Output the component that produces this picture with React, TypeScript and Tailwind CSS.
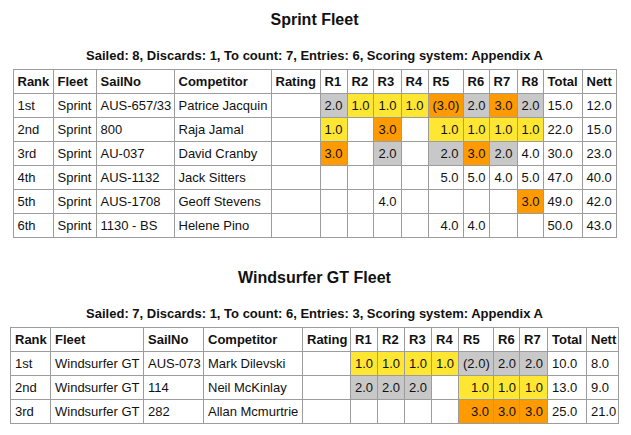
import React from "react";

type Cell = { v: string; c?: "g" | "y" | "o" };

const colorClass = (c?: "g" | "y" | "o") =>
  c === "g" ? "bg-[#c8c8c8]" : c === "y" ? "bg-[#ffe633]" : c === "o" ? "bg-[#ff9a00]" : "";

type Row = { rank: string; fleet: string; sail: string; comp: string; races: Cell[]; total: string; nett: string };

const sprintRows: Row[] = [
  { rank: "1st", fleet: "Sprint", sail: "AUS-657/33", comp: "Patrice Jacquin", races: [{ v: "2.0", c: "g" }, { v: "1.0", c: "y" }, { v: "1.0", c: "y" }, { v: "1.0", c: "y" }, { v: "(3.0)", c: "o" }, { v: "2.0", c: "g" }, { v: "3.0", c: "o" }, { v: "2.0", c: "g" }], total: "15.0", nett: "12.0" },
  { rank: "2nd", fleet: "Sprint", sail: "800", comp: "Raja Jamal", races: [{ v: "1.0", c: "y" }, { v: "" }, { v: "3.0", c: "o" }, { v: "" }, { v: "1.0", c: "y" }, { v: "1.0", c: "y" }, { v: "1.0", c: "y" }, { v: "1.0", c: "y" }], total: "22.0", nett: "15.0" },
  { rank: "3rd", fleet: "Sprint", sail: "AU-037", comp: "David Cranby", races: [{ v: "3.0", c: "o" }, { v: "" }, { v: "2.0", c: "g" }, { v: "" }, { v: "2.0", c: "g" }, { v: "3.0", c: "o" }, { v: "2.0", c: "g" }, { v: "4.0" }], total: "30.0", nett: "23.0" },
  { rank: "4th", fleet: "Sprint", sail: "AUS-1132", comp: "Jack Sitters", races: [{ v: "" }, { v: "" }, { v: "" }, { v: "" }, { v: "5.0" }, { v: "5.0" }, { v: "4.0" }, { v: "5.0" }], total: "47.0", nett: "40.0" },
  { rank: "5th", fleet: "Sprint", sail: "AUS-1708", comp: "Geoff Stevens", races: [{ v: "" }, { v: "" }, { v: "4.0" }, { v: "" }, { v: "" }, { v: "" }, { v: "" }, { v: "3.0", c: "o" }], total: "49.0", nett: "42.0" },
  { rank: "6th", fleet: "Sprint", sail: "1130 - BS", comp: "Helene Pino", races: [{ v: "" }, { v: "" }, { v: "" }, { v: "" }, { v: "4.0" }, { v: "4.0" }, { v: "" }, { v: "" }], total: "50.0", nett: "43.0" },
];

const windRows: Row[] = [
  { rank: "1st", fleet: "Windsurfer GT", sail: "AUS-073", comp: "Mark Dilevski", races: [{ v: "1.0", c: "y" }, { v: "1.0", c: "y" }, { v: "1.0", c: "y" }, { v: "1.0", c: "y" }, { v: "(2.0)", c: "g" }, { v: "2.0", c: "g" }, { v: "2.0", c: "g" }], total: "10.0", nett: "8.0" },
  { rank: "2nd", fleet: "Windsurfer GT", sail: "114", comp: "Neil McKinlay", races: [{ v: "2.0", c: "g" }, { v: "2.0", c: "g" }, { v: "2.0", c: "g" }, { v: "" }, { v: "1.0", c: "y" }, { v: "1.0", c: "y" }, { v: "1.0", c: "y" }], total: "13.0", nett: "9.0" },
  { rank: "3rd", fleet: "Windsurfer GT", sail: "282", comp: "Allan Mcmurtrie", races: [{ v: "" }, { v: "" }, { v: "" }, { v: "" }, { v: "3.0", c: "o" }, { v: "3.0", c: "o" }, { v: "3.0", c: "o" }], total: "25.0", nett: "21.0" },
];

const td = "border border-[#9c9c9c] px-[4px] h-[24px] whitespace-nowrap overflow-hidden";

function ResultsTable({ widths, rows, nRaces, tableW }: { widths: string[]; rows: Row[]; nRaces: number; tableW: string }) {
  const races = Array.from({ length: nRaces }, (_, i) => `R${i + 1}`);
  return (
    <table className={`mx-auto table-fixed border-collapse ${tableW}`}>
      <colgroup>
        {widths.map((w, i) => (
          <col key={i} className={w} />
        ))}
      </colgroup>
      <thead>
        <tr className="font-bold">
          <td className={`${td} text-left`}>Rank</td>
          <td className={`${td} text-left`}>Fleet</td>
          <td className={`${td} text-left`}>SailNo</td>
          <td className={`${td} text-left`}>Competitor</td>
          <td className={`${td} text-left`}>Rating</td>
          {races.map((r) => (
            <td key={r} className={`${td} text-left`}>{r}</td>
          ))}
          <td className={`${td} text-left`}>Total</td>
          <td className={`${td} text-left`}>Nett</td>
        </tr>
      </thead>
      <tbody>
        {rows.map((r) => (
          <tr key={r.rank}>
            <td className={td}>{r.rank}</td>
            <td className={td}>{r.fleet}</td>
            <td className={td}>{r.sail}</td>
            <td className={td}>{r.comp}</td>
            <td className={td}></td>
            {r.races.map((c, i) => (
              <td key={i} className={`${td} text-right ${colorClass(c.c)}`}>{c.v}</td>
            ))}
            <td className={td}>{r.total}</td>
            <td className={td}>{r.nett}</td>
          </tr>
        ))}
      </tbody>
    </table>
  );
}

export default function App() {
  return (
    <div className="w-[631px] h-[435px] bg-white text-[#111] text-[13px] leading-[15px] overflow-hidden" style={{ fontFamily: '"Liberation Sans", Arial, sans-serif' }}>
      <div className="pt-[11px] pr-[2px]">
        <div className="text-center font-bold text-[16px] leading-[18px]">Sprint Fleet</div>
        <div className="text-center font-bold mt-[19px]">Sailed: 8, Discards: 1, To count: 7, Entries: 6, Scoring system: Appendix A</div>
        <div className="mt-[6px]">
          <ResultsTable
            tableW="w-[603px]"
            nRaces={8}
            rows={sprintRows}
            widths={["w-[40px]", "w-[43px]", "w-[78px]", "w-[97px]", "w-[49px]", "w-[27px]", "w-[26px]", "w-[28px]", "w-[27px]", "w-[35px]", "w-[26px]", "w-[28px]", "w-[26px]", "w-[39px]", "w-[34px]"]}
          />
        </div>
        <div className="text-center font-bold text-[16px] leading-[18px] mt-[31px]">Windsurfer GT Fleet</div>
        <div className="text-center font-bold mt-[19px]">Sailed: 7, Discards: 1, To count: 6, Entries: 3, Scoring system: Appendix A</div>
        <div className="mt-[6px]">
          <ResultsTable
            tableW="w-[608px]"
            nRaces={7}
            rows={windRows}
            widths={["w-[40px]", "w-[93px]", "w-[60px]", "w-[99px]", "w-[48px]", "w-[27px]", "w-[27px]", "w-[27px]", "w-[27px]", "w-[35px]", "w-[26px]", "w-[28px]", "w-[39px]", "w-[32px]"]}
          />
        </div>
      </div>
    </div>
  );
}
